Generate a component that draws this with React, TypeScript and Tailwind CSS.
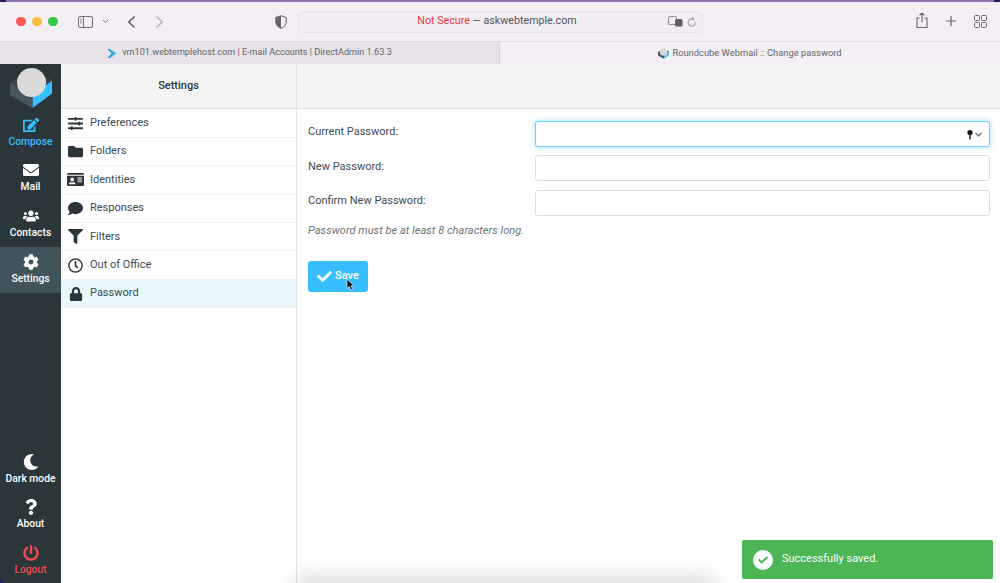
import React from "react";
import {
  FaEdit, FaEnvelope, FaUsers, FaCog, FaMoon, FaQuestion, FaPowerOff,
  FaSlidersH, FaFolder, FaIdCard, FaComment, FaFilter, FaRegClock, FaLock, FaCheck,
} from "react-icons/fa";

function Logo({ size = 42 }: { size?: number }) {
  return (
    <svg width={size} height={size} viewBox="0 0 42 41">
      <path d="M0 15 L22.7 28 V40.5 L0 28 Z" fill="#47555c" />
      <path d="M42 13 L22.7 28 V40.5 L42 26 Z" fill="#37beff" />
      <path d="M0 15 L14 7 L30 7 L42 13 L22.7 28 Z" fill="#3a474d" />
      <circle cx="21.5" cy="15" r="14.5" fill="#dadada" />
    </svg>
  );
}

const navTop = [
  { label: "Compose", Icon: FaEdit, cls: "text-[#37beff]", h: "h-[46px]" },
  { label: "Mail", Icon: FaEnvelope, cls: "text-white", h: "h-[45px]" },
  { label: "Contacts", Icon: FaUsers, cls: "text-white", h: "h-[46px]" },
];

const items = [
  { label: "Preferences", Icon: FaSlidersH, size: "text-[15px]" },
  { label: "Folders", Icon: FaFolder, size: "text-[15px]" },
  { label: "Identities", Icon: FaIdCard, size: "text-[17px]" },
  { label: "Responses", Icon: FaComment, size: "text-[15px]" },
  { label: "Filters", Icon: FaFilter, size: "text-[15px]" },
  { label: "Out of Office", Icon: FaRegClock, size: "text-[15px]" },
  { label: "Password", Icon: FaLock, size: "text-[14px]" },
];

function NavItem({ label, Icon, cls, h, active }: { label: string; Icon: any; cls: string; h: string; active?: boolean }) {
  return (
    <div className={`flex flex-col items-center justify-center gap-[2px] ${h} ${cls} ${active ? "bg-[#41535b]" : ""}`}>
      <Icon className="text-[16px]" />
      <span className="text-[10.3px] font-medium leading-[14px]">{label}</span>
    </div>
  );
}

function Field({ label, focus }: { label: string; focus?: boolean }) {
  return (
    <div className="flex items-center h-[26px] mb-[8.5px]">
      <span className="w-[227px] text-[11px] text-[#3d4a50] -mt-[2px]">{label}</span>
      <div
        className={`relative w-[455px] h-[26px] rounded-[3px] bg-white border ${
          focus ? "border-[#72cdfa] shadow-[0_0_5px_1px_#b5e6ff]" : "border-[#dedede]"
        }`}
      >
        {focus && (
          <svg className="absolute right-[5px] top-[7px]" width="18" height="11" viewBox="0 0 18 11">
            <circle cx="4" cy="3.5" r="2.6" fill="#111" />
            <rect x="3.2" y="5" width="1.6" height="5.5" fill="#333" />
            <path d="M9.5 4 L12.5 7 L15.5 4" fill="none" stroke="#666" strokeWidth="1.2" />
          </svg>
        )}
      </div>
    </div>
  );
}

export default function App() {
  return (
    <div className="relative w-[1000px] h-[583px] overflow-hidden flex flex-col bg-white font-['Roboto','Liberation_Sans',sans-serif]">
      {/* Browser toolbar */}
      <div className="h-[42px] shrink-0 flex items-center relative bg-[#f3eff5] border-t-2 border-[#9470ac] border-b border-b-[#e2dee4]">
        <div className="flex items-center gap-[6.5px] ml-[16px]">
          <span className="w-[9.5px] h-[9.5px] rounded-full bg-[#fc5753]" />
          <span className="w-[9.5px] h-[9.5px] rounded-full bg-[#fdbc40]" />
          <span className="w-[9.5px] h-[9.5px] rounded-full bg-[#33c748]" />
        </div>
        <svg className="ml-[20px]" width="15" height="12" viewBox="0 0 15 12">
          <rect x="0.5" y="0.5" width="14" height="11" rx="1.5" fill="none" stroke="#6f6c72" />
          <path d="M5.5 0.5 V11.5" stroke="#6f6c72" />
          <path d="M2 3 H4 M2 5 H4 M2 7 H4" stroke="#8c898f" />
        </svg>
        <svg className="ml-[9px]" width="7" height="5" viewBox="0 0 7 5">
          <path d="M1 1 L3.5 3.5 L6 1" fill="none" stroke="#77747a" strokeWidth="1" />
        </svg>
        <svg className="ml-[18px]" width="9" height="14" viewBox="0 0 9 14">
          <path d="M7.5 1.5 L1.8 7 L7.5 12.5" fill="none" stroke="#59565c" strokeWidth="1.4" />
        </svg>
        <svg className="ml-[19px]" width="9" height="14" viewBox="0 0 9 14">
          <path d="M1.5 1.5 L7.2 7 L1.5 12.5" fill="none" stroke="#b5b2b8" strokeWidth="1.4" />
        </svg>
        <svg className="ml-[111px]" width="12" height="14" viewBox="0 0 12 14">
          <path d="M6 0.8 L11.2 2.4 V7 C11.2 10 9 12.2 6 13.3 C3 12.2 0.8 10 0.8 7 V2.4 Z" fill="#f3eff5" stroke="#66636a" />
          <path d="M6 0.8 L0.8 2.4 V7 C0.8 10 3 12.2 6 13.3 Z" fill="#66636a" />
        </svg>
        <div className="ml-[11px] w-[405px] h-[22px] rounded-[5px] bg-[#f1edf3] border border-[#e8e4ea] relative flex items-center justify-center text-[10.7px] text-[#55525a]">
          <span className="-ml-[6px]">
            <span className="text-[#f0383c]">Not Secure</span> — askwebtemple.com
          </span>
          <svg className="absolute right-[19px] top-[4px]" width="15" height="11" viewBox="0 0 15 11">
            <rect x="0.5" y="0.5" width="8" height="8" rx="1.5" fill="none" stroke="#8d8a90" />
            <rect x="7" y="3" width="7.5" height="7.5" rx="1.5" fill="#5f5c62" />
          </svg>
          <svg className="absolute right-[5px] top-[4px]" width="10" height="12" viewBox="0 0 10 12">
            <path d="M8.5 6.5 A3.7 3.7 0 1 1 5 2.8 H6.5 M5.2 1 L7 2.8 L5.2 4.6" fill="none" stroke="#8d8a90" strokeWidth="0.9" />
          </svg>
        </div>
        <svg className="absolute left-[915px] top-[10px]" width="14" height="17" viewBox="0 0 14 17">
          <path d="M4.5 6 H2 V15.5 H12 V6 H9.5 M7 10.5 V1.2 M4.5 3.4 L7 1 L9.5 3.4" fill="none" stroke="#69666c" strokeWidth="1.1" />
        </svg>
        <svg className="absolute left-[945px] top-[13px]" width="12" height="12" viewBox="0 0 12 12">
          <path d="M6 1 V11 M1 6 H11" stroke="#69666c" strokeWidth="1.2" />
        </svg>
        <svg className="absolute left-[974px] top-[13px]" width="13" height="13" viewBox="0 0 13 13">
          <rect x="0.5" y="0.5" width="5" height="5" rx="1" fill="none" stroke="#69666c" />
          <rect x="7.5" y="0.5" width="5" height="5" rx="1" fill="none" stroke="#69666c" />
          <rect x="0.5" y="7.5" width="5" height="5" rx="1" fill="none" stroke="#69666c" />
          <rect x="7.5" y="7.5" width="5" height="5" rx="1" fill="none" stroke="#69666c" />
        </svg>
      </div>

      {/* Tabs */}
      <div className="h-[22px] shrink-0 flex text-[#66636a]">
        <div className="w-[500px] bg-[#e7e3e9] border-r border-[#d8d4da] flex items-center justify-center gap-[5px] text-[9.1px]">
          <svg width="10" height="11" viewBox="0 0 10 11">
            <path d="M0.5 1 L4.5 5.5 L0.5 10 H3 L7.5 5.5 L3 1 Z" fill="#2a9fd8" />
            <path d="M5 1.5 L9.5 5.5 L5 9.5 L6.8 5.5 Z" fill="#45c0ee" />
          </svg>
          <span>vm101.webtemplehost.com | E-mail Accounts | DirectAdmin 1.63.3</span>
        </div>
        <div className="flex-1 bg-[#f3eff5] flex items-center justify-center gap-[3px] text-[9.35px]">
          <Logo size={11} />
          <span>Roundcube Webmail :: Change password</span>
        </div>
      </div>

      {/* App */}
      <div className="flex-1 flex min-h-0">
        <aside className="w-[61px] shrink-0 bg-[#2a3639] flex flex-col">
          <div className="h-[45.5px] flex items-start justify-center pt-[3px]">
            <Logo size={42} />
          </div>
          {navTop.map((n) => (
            <NavItem key={n.label} {...n} />
          ))}
          <NavItem label="Settings" Icon={FaCog} cls="text-white" h="h-[46px]" active />
          <div className="flex-1" />
          <NavItem label="Dark mode" Icon={FaMoon} cls="text-white" h="h-[45px]" />
          <NavItem label="About" Icon={FaQuestion} cls="text-white" h="h-[46px]" />
          <NavItem label="Logout" Icon={FaPowerOff} cls="text-[#ef4950] -mb-[1px]" h="h-[46px]" />
        </aside>

        <section className="w-[236px] shrink-0 border-r border-[#e4e4e4] flex flex-col">
          <div className="h-[45px] shrink-0 bg-[#f4f4f4] border-b border-[#dcdcdc] flex items-center justify-center text-[11px] font-medium text-[#2c363a]">
            Settings
          </div>
          <ul className="pt-[0.5px]">
            {items.map(({ label, Icon, size }) => (
              <li
                key={label}
                className={`h-[28.4px] flex items-center border-b border-[#f3f3f3] text-[11px] text-[#3d4a50] ${
                  label === "Password" ? "bg-[#e9f8fe]" : ""
                }`}
              >
                <span className="w-[29px] flex justify-center shrink-0">
                  <Icon className={`${size} text-[#2c363a]`} />
                </span>
                {label}
              </li>
            ))}
          </ul>
        </section>

        <main className="flex-1 min-w-0 flex flex-col">
          <div className="h-[45px] shrink-0 bg-[#f4f4f4] border-b border-[#dcdcdc]" />
          <div className="pl-[11px] pt-[11.5px] flex-1">
            <Field label="Current Password:" focus />
            <Field label="New Password:" />
            <Field label="Confirm New Password:" />
            <p className="text-[11px] italic text-[#6a7478] tracking-[0.05px] mt-[8px] leading-[14px]">
              Password must be at least 8 characters long.
            </p>
            <button className="relative mt-[23px] w-[60px] h-[31px] rounded-[3px] bg-[#37beff] text-white text-[11px] font-medium flex items-center pl-[9px] gap-[3px]">
              <FaCheck className="text-[15px]" />
              <span>Save</span>
              <svg className="absolute left-[38px] top-[17px]" width="9" height="13" viewBox="0 0 9 13">
                <path d="M1 1 V10.5 L3.3 8.4 L5 12 L6.6 11.2 L5 7.8 H8 Z" fill="#111" stroke="#fff" strokeWidth="0.6" />
              </svg>
            </button>
          </div>
        </main>
      </div>

      {/* Shadow of the dock below the window */}
      <div className="absolute left-[300px] top-[586px] w-[410px] h-[8px] rounded-full shadow-[0_0_22px_8px_rgba(0,0,0,0.16)]" />

      {/* Window corners */}
      <div className="absolute left-0 top-0 w-[6px] h-[2px] bg-[#2a1a5e]" />
      <div className="absolute right-0 top-0 w-[6px] h-[2px] bg-[#2a1a5e]" />
      <div className="absolute left-0 bottom-0 w-[3px] h-[3px] bg-[#2a1a5e]" />

      {/* Toast */}
      <div className="absolute left-[742px] top-[540px] w-[251px] h-[39px] rounded-[2px] bg-[#4cb654] flex items-center pl-[11px] text-white text-[11px]">
        <span className="w-[20px] h-[20px] rounded-full bg-white flex items-center justify-center mr-[9px]">
          <FaCheck className="text-[10px] text-[#4cb654]" />
        </span>
        Successfully saved.
      </div>
    </div>
  );
}
